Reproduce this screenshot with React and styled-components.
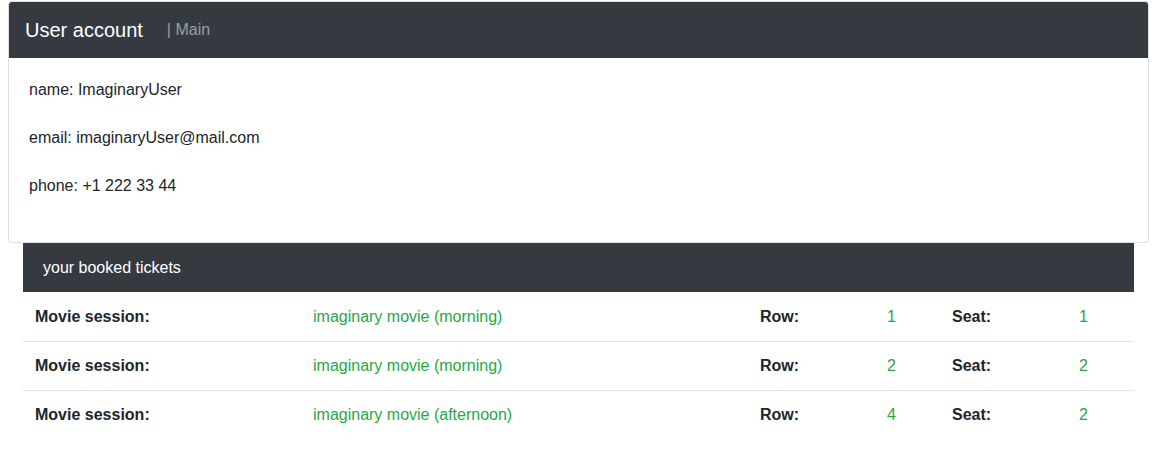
import styled, { createGlobalStyle } from "styled-components";

const GlobalStyle = createGlobalStyle`
  body {
    margin: 0;
    font-family: "Liberation Sans", Arial, sans-serif;
    font-size: 16px;
    line-height: 1.5;
    color: #212529;
    background: #fff;
  }
`;

const Page = styled.div`
  padding: 1px 8px 8px;
`;

const Card = styled.div`
  border: 1px solid rgba(0, 0, 0, 0.125);
  border-radius: 4px;
  overflow: hidden;
  background: #fff;
`;

const Navbar = styled.nav`
  height: 56px;
  background: #343a40;
  display: flex;
  align-items: center;
  padding: 0 16px;
`;

const Brand = styled.span`
  font-size: 20px;
  color: #fff;
  margin-right: 16px;
`;

const NavLink = styled.a`
  color: rgba(255, 255, 255, 0.5);
  padding: 0 8px;
  text-decoration: none;
`;

const CardBody = styled.div`
  padding: 20px;
`;

const Info = styled.p`
  margin: 0 0 24px;
  line-height: 24px;
`;

const Container = styled.div`
  max-width: 1140px;
  margin: 0 auto;
  padding: 0 15px;
`;

const TableHead = styled.div`
  background: #343a40;
  color: #fff;
  height: 49px;
  display: flex;
  align-items: center;
  padding: 0 20px;
`;

const Row = styled.div`
  display: grid;
  grid-template-columns: 278px 447px 127px 65px 127px 66px;
  border-top: 1px solid ${(p) => (p.first ? "#fff" : "#dee2e6")};
`;

const Cell = styled.div`
  padding: 12px;
  line-height: 24px;
  font-weight: ${(p) => (p.label ? 700 : 400)};
  color: ${(p) => (p.label ? "#212529" : "#28a745")};
`;

const tickets = [
  { movie: "imaginary movie (morning)", row: 1, seat: 1 },
  { movie: "imaginary movie (morning)", row: 2, seat: 2 },
  { movie: "imaginary movie (afternoon)", row: 4, seat: 2 },
];

const App = () => {
  return (
    <Page>
      <GlobalStyle />
      <Card>
        <Navbar>
          <Brand>User account</Brand>
          <NavLink href="#">| Main</NavLink>
        </Navbar>
        <CardBody>
          <Info>name: ImaginaryUser</Info>
          <Info>email: imaginaryUser@mail.com</Info>
          <Info>phone: +1 222 33 44</Info>
        </CardBody>
      </Card>
      <Container>
        <TableHead>your booked tickets</TableHead>
        {tickets.map((t, i) => (
          <Row key={i} first={i === 0}>
            <Cell label>Movie session:</Cell>
            <Cell>{t.movie}</Cell>
            <Cell label>Row:</Cell>
            <Cell>{t.row}</Cell>
            <Cell label>Seat:</Cell>
            <Cell>{t.seat}</Cell>
          </Row>
        ))}
      </Container>
    </Page>
  );
};

export default App;
